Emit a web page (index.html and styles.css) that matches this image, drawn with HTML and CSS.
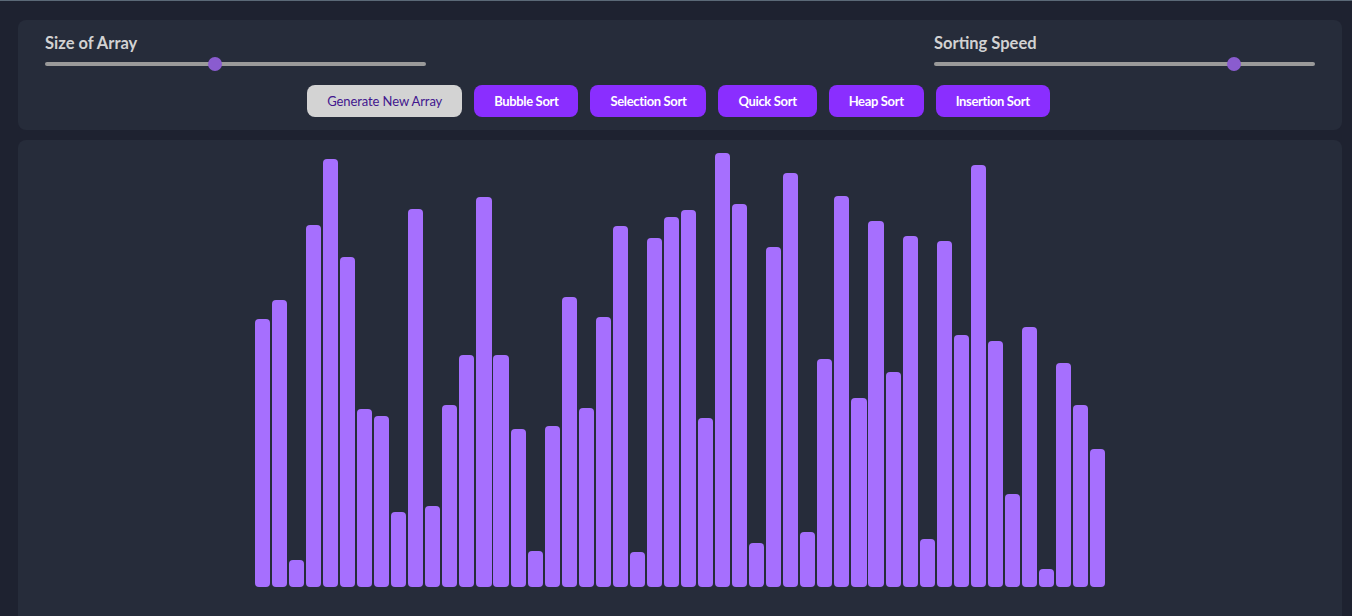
FILE: index.html
```html
<!DOCTYPE html>
<html lang="en">
<head>
<meta charset="utf-8">
<title>Sorting Visualizer</title>
<link rel="stylesheet" href="styles.css">
</head>
<body>
  <header class="controls">
    <div class="sliders">
      <div class="control">
        <label class="control-label" for="size">Size of Array</label>
        <input class="range" id="size" type="range" min="0" max="1000" value="444">
      </div>
      <div class="control">
        <label class="control-label" for="speed">Sorting Speed</label>
        <input class="range" id="speed" type="range" min="0" max="1000" value="798">
      </div>
    </div>
    <div class="buttons">
      <button class="btn btn-light">Generate New Array</button>
      <button class="btn">Bubble Sort</button>
      <button class="btn">Selection Sort</button>
      <button class="btn">Quick Sort</button>
      <button class="btn">Heap Sort</button>
      <button class="btn">Insertion Sort</button>
    </div>
  </header>
  <main class="stage">
    <div class="bars">
      <div class="bar" style="height:268px"></div>
      <div class="bar" style="height:287px"></div>
      <div class="bar" style="height:27px"></div>
      <div class="bar" style="height:362px"></div>
      <div class="bar" style="height:428px"></div>
      <div class="bar" style="height:330px"></div>
      <div class="bar" style="height:178px"></div>
      <div class="bar" style="height:171px"></div>
      <div class="bar" style="height:75px"></div>
      <div class="bar" style="height:378px"></div>
      <div class="bar" style="height:81px"></div>
      <div class="bar" style="height:182px"></div>
      <div class="bar" style="height:232px"></div>
      <div class="bar" style="height:390px"></div>
      <div class="bar" style="height:232px"></div>
      <div class="bar" style="height:158px"></div>
      <div class="bar" style="height:36px"></div>
      <div class="bar" style="height:161px"></div>
      <div class="bar" style="height:290px"></div>
      <div class="bar" style="height:179px"></div>
      <div class="bar" style="height:270px"></div>
      <div class="bar" style="height:361px"></div>
      <div class="bar" style="height:35px"></div>
      <div class="bar" style="height:349px"></div>
      <div class="bar" style="height:370px"></div>
      <div class="bar" style="height:377px"></div>
      <div class="bar" style="height:169px"></div>
      <div class="bar" style="height:434px"></div>
      <div class="bar" style="height:383px"></div>
      <div class="bar" style="height:44px"></div>
      <div class="bar" style="height:340px"></div>
      <div class="bar" style="height:414px"></div>
      <div class="bar" style="height:55px"></div>
      <div class="bar" style="height:228px"></div>
      <div class="bar" style="height:391px"></div>
      <div class="bar" style="height:189px"></div>
      <div class="bar" style="height:366px"></div>
      <div class="bar" style="height:215px"></div>
      <div class="bar" style="height:351px"></div>
      <div class="bar" style="height:48px"></div>
      <div class="bar" style="height:346px"></div>
      <div class="bar" style="height:252px"></div>
      <div class="bar" style="height:422px"></div>
      <div class="bar" style="height:246px"></div>
      <div class="bar" style="height:93px"></div>
      <div class="bar" style="height:260px"></div>
      <div class="bar" style="height:18px"></div>
      <div class="bar" style="height:224px"></div>
      <div class="bar" style="height:182px"></div>
      <div class="bar" style="height:138px"></div>
    </div>
  </main>
</body>
</html>
```
FILE: styles.css
```css
html, body {
  overflow: hidden;
}
body {
  margin: 0;
  height: 616px;
  box-sizing: border-box;
  border-top: 1px solid #5b6977;
  padding: 19px 10px 0 18px;
  background: #1e2230;
  font-family: Lato, "Noto Sans", sans-serif;
  display: flex;
  flex-direction: column;
  gap: 10px;
}
.controls {
  background: #262c3a;
  border-radius: 8px;
  padding: 14px 27px 13px;
  display: flex;
  flex-direction: column;
  gap: 14px;
}
.sliders {
  display: flex;
  justify-content: space-between;
}
.control {
  display: flex;
  flex-direction: column;
  width: 381px;
  gap: 5px;
}
.control-label {
  font-size: 16.5px;
  font-weight: 700;
  line-height: 18px;
  color: #d2d2d2;
}
.range {
  -webkit-appearance: none;
  appearance: none;
  margin: 0;
  width: 381px;
  height: 14px;
  background: transparent;
}
.range::-webkit-slider-runnable-track {
  height: 4px;
  border-radius: 2px;
  background: #9a9a9a;
}
.range::-webkit-slider-thumb {
  -webkit-appearance: none;
  appearance: none;
  width: 14px;
  height: 14px;
  border-radius: 50%;
  background: #8a5ccf;
  margin-top: -5px;
  border: none;
}
.buttons {
  display: flex;
  justify-content: center;
  gap: 12px;
  padding-right: 3px;
}
.btn {
  font-family: Lato, "Noto Sans", sans-serif;
  font-size: 13px;
  font-weight: 700;
  line-height: 16px;
  letter-spacing: -0.35px;
  padding: 8px 20px;
  border: none;
  border-radius: 8px;
  background: #8a2eff;
  color: #ffffff;
}
.btn-light {
  background: #d3d3d3;
  color: #42168e;
  font-weight: 400;
  letter-spacing: -0.1px;
}
.stage {
  flex: 1 0 auto;
  height: 490px;
  background: #262c3a;
  border-radius: 8px;
  box-sizing: border-box;
  padding-bottom: 43px;
  display: flex;
  justify-content: center;
  align-items: flex-end;
}
.bars {
  display: flex;
  align-items: flex-end;
  gap: 1.96px;
}
.bar {
  width: 15.1px;
  background: #a66ffe;
  border-radius: 4px;
}
```
